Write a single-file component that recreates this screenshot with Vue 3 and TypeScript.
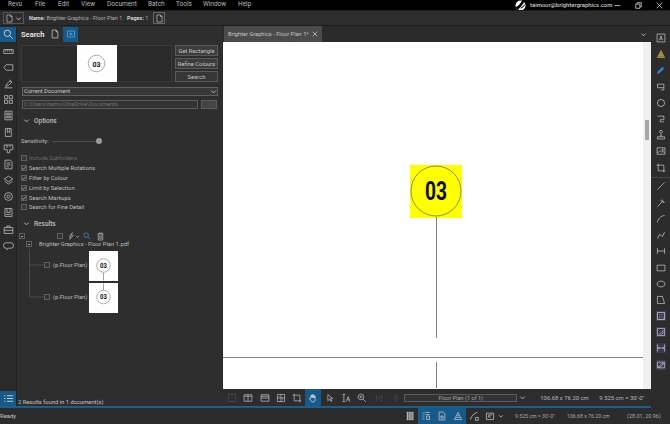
<script setup lang="ts">
const P: Record<string, string> = {
  search: 'M8.5 8.5 12.5 12.5M9.5 5.5a4 4 0 1 1-8 0a4 4 0 0 1 8 0Z',
  ruler: 'M1 4.5h12v5H1ZM3.5 4.5v2.5M6 4.5v2.5M8.5 4.5v2.5M11 4.5v2.5',
  tag: 'M4 3.5h8.5v7H4L1 7Z',
  pen: 'M2 12.5h10M3.5 10.5 5 7.5l4-4 2 2-4 4ZM8 2.5l3.5 3',
  grid: 'M2 2h4v4H2ZM8 2h4v4H8ZM2 8h4v4H2ZM8 8h4v4H8Z',
  panel: 'M2.5 1.5h9v11h-9ZM4.5 4h5v2h-5ZM4.5 8h5v2h-5Z',
  book: 'M3 2h7.5v10H3ZM5.5 2v5l1.5-1 1.5 1V2',
  map: 'M1.5 2.5h11v6h-4v4h-3v-4h-4ZM5 2.5v4M9 2.5v3',
  form: 'M2.5 1.5h7l2 2v9h-9ZM4.5 5h5M4.5 7.5h5M4.5 10h3',
  layers: 'M7 1.5 12.5 5 7 8.5 1.5 5ZM2 8l5 3.5L12 8',
  gear: 'M7 2a5 5 0 1 1 0 10a5 5 0 0 1 0-10ZM7 5a2 2 0 1 1 0 4a2 2 0 0 1 0-4Z',
  bookmark: 'M2.5 2h9v10h-9ZM5 2v5h4V2M4 9.5h6',
  case: 'M1.5 4.5h11v7.5h-11ZM5 4.5V2.5h4v2M1.5 8h11',
  cloud: 'M4 3.5h6a3.5 3.5 0 0 1 0 7H7l-2 2v-2H4a3.5 3.5 0 0 1 0-7Z',
  list: 'M5 3.5h8M5 7h8M5 10.5h8M1.5 3.5h1.5M1.5 7h1.5M1.5 10.5h1.5',
  doc: 'M3 1.5h5.5l2.5 2.5v8.5H3ZM8.5 1.5V4H11',
  rect: 'M2 3h10v8H2ZM5.5 6h3v2h-3Z',
  split: 'M1.5 2.5h11v9h-11ZM7 2.5v9M1.5 4.5h11',
  hsplit: 'M1.5 2.5h11v9h-11ZM1.5 7h11M1.5 4.5h11',
  page: 'M2 2h10v10H2Z',
  compare: 'M2 2h10v10H2ZM7 2v10M2 7h10M4 4.5h1M9 9.5h1',
  crop: 'M3 1v10h10M1 3h10v10',
  hand: 'M4 7V3.5h1.5V6.5V2.5H7V6.5V3H8.5V7V4.5H10V9c0 2-1 3.5-3 3.5S4.5 11.5 3.5 10L2 8l1-.8L4 8.5',
  cursor: 'M4 2v9l2.5-2.5 2 3.5 1-.6-2-3.4H11Z',
  textsel: 'M2 2h4M2 12h4M4 2v10M7.5 12l2.5-7 2.5 7M8.5 9.5h3',
  zoom: 'M8.5 8.5 12.5 12.5M9.5 5.5a4 4 0 1 1-8 0a4 4 0 0 1 8 0ZM3.5 5.5h4M5.5 3.5v4',
  first: 'M3.5 3v8M11 3 6 7l5 4Z',
  prev: 'M10 3 5 7l5 4Z',
  dots: 'M2 2.5h10M2 5.5h10M2 8.5h10M2 11.5h10M3.5 1v12M6 1v12M8.5 1v12M11 1v12',
  snap: 'M2 3h3M2 7h3M2 11h3M6 2h6M6 5h6M8 7h4v5H8Z',
  pagefit: 'M3 1.5h5.5l2.5 2.5v8.5H3ZM5.5 7h3v3h-3Z',
  hilite: 'M2 12 7 2l5 10ZM4.5 9h5M6 6.5h2',
  measure: 'M2 12C3 7 7 3 12 2M9 9h4v4H9Z',
  combo: 'M2 3h10v9H2ZM5 5.5h5M5 5.5v3h3',
  tbox: 'M1.5 1.5h11v11h-11ZM5 10l2-6 2 6M5.7 8.3h2.6',
  pencil: 'M2 12l1-3 6-6 2 2-6 6Z',
  callout: 'M2 3h9v5H2ZM11 8v3H7',
  cloudc: 'M7 2a5 5 0 1 1 0 10a5 5 0 0 1 0-10Z',
  poly: 'M2 3h9v5H6v3h5',
  stamp: 'M2 12.5h10v-3H2ZM7 9.5V7M5 2.5a2 2 0 1 1 4 0a2 2 0 0 1-4 0ZM5.5 7h3',
  image: 'M1.5 2.5h11v9h-11ZM2 10l3.5-3.5 2.5 2 1.5-1.5L12 10M8.5 4.5h1.5v1.5H8.5Z',
  cropr: 'M3 1v10h10M1 3h10v10',
  line: 'M2 12 12 2',
  arrow: 'M2 12 9 5M8 2.5l3.5 3.5-1 1L7 3.5Z',
  arc: 'M2 12C2.5 7 6 3 12 2',
  poly2: 'M2 12 5 6l4 3 3-6',
  dim: 'M2 3v8M12 3v8M2 7h10',
  rrect: 'M1.5 3h11v8h-11Z',
  ellipse: 'M7 3c3.2 0 5.5 1.8 5.5 4S10.200 11 7 11 1.500 9.200 1.500 7 3.800 3 7 3Z',
  polygon: 'M2 2h7l3 10H2Z',
  area: 'M2 2h10v10H2ZM5 5h1M8 5h1M5 8h1M8 8h1M5 10h1M10 10h1',
  slash: 'M2 2h10v10H2ZM4 11l7-7M7 11l4-4',
  width: 'M2 2v10M12 2v10M3 7h8M4 5.500v3M10 5.500v3',
  hatch: 'M2 3h10v8H2ZM3 10l5-5h3L6 10Z',
  trash: 'M2.5 3h9M5 3V1.500h4V3M3.500 3v9.500h7V3M6 5v6M8 5v6',
  lightning: 'M9.500 1 4 8h3l-2.500 5L11 6H7.500Z',
}

const leftIcons = ['ruler', 'tag', 'pen', 'grid', 'panel', 'book', 'map', 'form', 'layers', 'gear', 'bookmark', 'case', 'cloud']
const menus = [
  ['Revu', 27], ['File', 23], ['Edit', 23], ['View', 26], ['Document', 41], ['Batch', 28], ['Tools', 27], ['Window', 35], ['Help', 20],
] as const
const checks = [
  { label: 'Include Subfolders', on: false, dim: true },
  { label: 'Search Multiple Rotations', on: true, dim: false },
  { label: 'Filter by Colour', on: true, dim: false },
  { label: 'Limit by Selection', on: true, dim: false },
  { label: 'Search Markups', on: true, dim: false },
  { label: 'Search for Fine Detail', on: false, dim: false },
]
const rightIcons = [
  { i: 'tbox', c: '#c9c9c9' }, { i: 'hilite', c: '#b9a54a', f: '#8f7f35' }, { i: 'pencil', c: '#2f86c9', f: '#2f86c9' }, { i: 'callout', c: '#c9c9c9' },
  { i: 'cloudc', c: '#c9c9c9' }, { i: 'poly', c: '#c9c9c9' }, { i: 'stamp', c: '#c9c9c9' }, { i: 'image', c: '#c9c9c9' },
  { i: 'cropr', c: '#c9c9c9' }, { i: 'line', c: '#c9c9c9', sep: true }, { i: 'arrow', c: '#c9c9c9' }, { i: 'arc', c: '#c9c9c9' },
  { i: 'poly2', c: '#c9c9c9' }, { i: 'dim', c: '#c9c9c9' }, { i: 'rrect', c: '#c9c9c9' }, { i: 'ellipse', c: '#c9c9c9' },
  { i: 'polygon', c: '#c9c9c9' }, { i: 'area', c: '#dcdcdc', bg: true }, { i: 'slash', c: '#c9c9c9', bg: true },
  { i: 'width', c: '#c9c9c9', bg: true }, { i: 'hatch', c: '#c9c9c9', bg: true },
]
const docTools = [
  { i: 'page', dim: true }, { i: 'split' }, { i: 'hsplit' }, { i: 'compare', gap: true }, { i: 'crop' },
  { i: 'hand', active: true }, { i: 'cursor' }, { i: 'textsel' }, { i: 'zoom' }, { i: 'first', dim: true }, { i: 'prev', dim: true },
]
const statusTools = [
  { i: 'dots', active: false }, { i: 'snap', active: true }, { i: 'pagefit', active: true }, { i: 'hilite', active: true },
  { i: 'measure', active: false }, { i: 'combo', active: false },
]
const resultThumbs = [
  { cy: 14.5, line: 'M15 22V30' },
  { cy: 14, line: 'M15 0V7' },
]
</script>

<template>
  <div class="app">
    <header class="menubar">
      <nav class="menus">
        <span v-for="m in menus" :key="m[0]" class="menu" :style="{ width: m[1] + 'px' }">{{ m[0] }}</span>
      </nav>
      <div class="account">
        <svg class="logo" viewBox="0 0 12 12"><circle cx="6" cy="6" r="5.500" fill="#fff" /><path d="M1 8C4 7 6 4 8 .5L10 2C8 5 6 8 3 10.500ZM6 9c2-.5 3-1.500 5-4.500" fill="#000" stroke="#000" stroke-width=".6" /></svg>
        <span class="email">taimoor@brightergraphics.com</span>
        <div class="winctl">
          <svg viewBox="0 0 10 10"><path d="M1 5h8" /></svg>
          <svg viewBox="0 0 10 10"><path d="M1 3h6v6H1ZM3 3V1h6v6H7" /></svg>
          <svg viewBox="0 0 10 10"><path d="M1 1l8 8M9 1l-8 8" /></svg>
        </div>
      </div>
    </header>

    <div class="filebar">
      <span class="filebtn">
        <svg class="ico" viewBox="0 0 14 14"><path :d="P.doc" /></svg>
        <svg class="chev" viewBox="0 0 8 8"><path d="M1.500 3 4 5.500 6.500 3" /></svg>
      </span>
      <span class="fileinfo"><b>Name:</b> Brighter Graphics - Floor Plan 1</span>
      <span class="fileinfo pages"><b>Pages:</b> 1</span>
      <span class="pagebtn"><svg class="ico" viewBox="0 0 14 14"><path :d="P.doc" /></svg></span>
    </div>

    <div class="workspace">
      <div class="work-left">
        <div class="work-main">
          <aside class="rail">
            <div class="rail-item active"><svg viewBox="0 0 14 14"><path :d="P.search" /></svg></div>
            <div v-for="ic in leftIcons" :key="ic" class="rail-item"><svg viewBox="0 0 14 14"><path :d="P[ic]" /></svg></div>
            <div class="rail-item active rail-bottom"><svg viewBox="0 0 14 14"><path :d="P.list" /></svg></div>
          </aside>

          <section class="panel">
            <div class="panel-head">
              <span class="panel-title">Search</span>
              <span class="head-btn"><svg viewBox="0 0 14 14"><path :d="P.doc" /></svg></span>
              <span class="head-btn on"><svg viewBox="0 0 14 14"><path :d="P.rect" /></svg></span>
            </div>

            <div class="query">
              <div class="preview">
                <div class="thumb">
                  <svg viewBox="0 0 40 37"><circle cx="19.500" cy="18.500" r="8.300" fill="#fff" stroke="#777" stroke-width=".6" /><text x="19.500" y="21.500" text-anchor="middle" textLength="8" lengthAdjust="spacingAndGlyphs" class="tn">03</text></svg>
                </div>
              </div>
              <div class="query-btns">
                <button>Get Rectangle</button>
                <button>Refine Colours</button>
                <button class="plain">Search</button>
              </div>
            </div>

            <div class="select">Current Document<svg viewBox="0 0 8 8"><path d="M1.500 3 4 5.500 6.500 3" /></svg></div>
            <div class="pathrow">
              <div class="path">C:\Users\taimo\OneDrive\Documents</div>
              <div class="pathbtn">...</div>
            </div>

            <div class="section options"><svg viewBox="0 0 8 8"><path d="M1.500 3 4 5.500 6.500 3" /></svg>Options</div>

            <div class="sensitivity">
              <span>Sensitivity:</span>
              <div class="track"><i></i></div>
            </div>

            <div class="checks">
              <label v-for="c in checks" :key="c.label" :class="{ dim: c.dim }">
                <span class="box"><svg v-if="c.on" viewBox="0 0 8 8"><path d="M1.500 4 3.300 6 6.500 2" /></svg></span>{{ c.label }}
              </label>
            </div>

            <div class="section results"><svg viewBox="0 0 8 8"><path d="M1.500 3 4 5.500 6.500 3" /></svg>Results</div>

            <div class="tree">
              <svg class="tree-lines" viewBox="0 0 60 80"><path d="M8.500 17V65M8.500 33H23M8.500 65H23" /></svg>
              <div class="tree-tools">
                <span class="mini minus"></span>
                <span class="mini blank"></span>
                <svg class="bolt" viewBox="0 0 14 14"><path :d="P.lightning" /></svg>
                <svg class="small" viewBox="0 0 8 8"><path d="M1.500 3 4 5.500 6.500 3" /></svg>
                <svg viewBox="0 0 14 14" class="blue"><path :d="P.search" /></svg>
                <svg class="bin" viewBox="0 0 14 14"><path :d="P.trash" /></svg>
              </div>
              <div class="tree-file"><span class="mini minus"></span>Brighter Graphics - Floor Plan 1.pdf</div>
              <div v-for="(t, n) in resultThumbs" :key="n" class="result-row">
                <span class="mini"></span>
                <span class="rlabel">(p.Floor Plan)</span>
                <div class="rthumb">
                  <svg viewBox="0 0 30 30"><path :d="t.line" stroke="#777" stroke-width=".7" fill="none" /><circle cx="15" :cy="t.cy" r="7" fill="#fff" stroke="#777" stroke-width=".6" /><text x="15" :y="t.cy + 2.500" text-anchor="middle" textLength="7" lengthAdjust="spacingAndGlyphs" class="tn small">03</text></svg>
                </div>
              </div>
            </div>

            <div class="found">2 Results found in 1 document(s)</div>
          </section>

          <main class="doc">
            <div class="tabbar">
              <div class="tab">Brighter Graphics - Floor Plan 1*<svg viewBox="0 0 8 8"><path d="M1 1l6 6M7 1 1 7" /></svg></div>
              <svg class="tabchev" viewBox="0 0 8 8"><path d="M1.500 3 4 5.500 6.500 3" /></svg>
            </div>
            <div class="canvas">
              <svg class="sheet" viewBox="0 0 420 347" preserveAspectRatio="none">
                <rect x="187" y="123" width="52" height="53" fill="#ffff00" />
                <circle cx="213" cy="149" r="25" fill="none" stroke="#5d5d2a" stroke-width=".7" />
                <text x="213" y="158" text-anchor="middle" textLength="22" lengthAdjust="spacingAndGlyphs" class="big">03</text>
                <path d="M213.500 175V296M0 315.500H420M213.500 320V346" stroke="#808080" stroke-width="1" fill="none" />
              </svg>
              <div class="vscroll"><i></i></div>
            </div>
            <div class="doctools">
              <span
                v-for="(t, idx) in docTools"
                :key="idx"
                class="dt"
                :class="{ active: t.active, dim: t.dim }"
              ><svg viewBox="0 0 14 14"><path :d="P[t.i]" /></svg></span>
              <div class="pagebox">Floor Plan (1 of 1)</div>
              <svg class="dchev" viewBox="0 0 8 8"><path d="M1.500 3 4 5.500 6.500 3" /></svg>
              <span class="dsize">106.68 x 76.20 cm</span>
              <span class="dscale">9.525 cm = 30'-0"</span>
            </div>
          </main>
        </div>
        <div class="accent"></div>
      </div>

      <aside class="rrail">
        <div v-for="(r, idx) in rightIcons" :key="idx" class="rr" :class="{ sep: r.sep, bg: r.bg }">
          <svg viewBox="0 0 14 14" :style="{ stroke: r.c, fill: r.f || 'none' }"><path :d="P[r.i]" /></svg>
        </div>
      </aside>
    </div>

    <footer class="status">
      <span class="ready">Ready</span>
      <div class="stools">
        <span v-for="(s, idx) in statusTools" :key="idx" class="st" :class="{ active: s.active }"><svg viewBox="0 0 14 14"><path :d="P[s.i]" /></svg></span>
        <svg class="schev" viewBox="0 0 8 8"><path d="M1.500 3 4 5.500 6.500 3" /></svg>
      </div>
      <span class="sv s1">9.525 cm = 30'-0"</span>
      <span class="sv s2">106.68 x 76.20 cm</span>
      <span class="sv s3">(28.01, 20.96)</span>
    </footer>
  </div>
</template>

<style scoped>
.app { width: 670px; height: 424px; display: flex; flex-direction: column; overflow: hidden; background: #2c2c2c; color: #c8c8c8; font-family: Roboto, "Liberation Sans", sans-serif; font-size: 6px; }
svg { fill: none; stroke: #c8c8c8; stroke-width: 1; display: block; }

.menubar { height: 10px; background: #000; display: flex; justify-content: space-between; flex: none; }
.menus { display: flex; padding-left: 8px; }
.menu { font-size: 6.500px; line-height: 9px; color: #b8b8b8; }
.account { display: flex; align-items: center; }
.logo { width: 11px; height: 11px; stroke: none; margin-right: 4px; }
.email { width: 84px; font-size: 5.900px; font-weight: 500; color: #c8c8c8; }
.winctl { display: flex; gap: 14px; padding-right: 7px; }
.winctl svg { width: 7px; height: 7px; stroke-width: 1.200; }

.filebar { height: 16px; flex: none; display: flex; align-items: center; background: #2d2d2d; border-top: 1px solid #1c1c1c; border-bottom: 1px solid #1e1e1e; box-sizing: border-box; padding-left: 3px; }
.filebtn { width: 21px; height: 12px; border: 1px solid #555; box-sizing: border-box; display: flex; align-items: center; justify-content: space-between; padding: 0 1px; }
.filebtn .ico { width: 9px; height: 9px; }
.chev { width: 7px; height: 7px; }
.fileinfo { font-size: 5.500px; color: #b0b0b0; margin-left: 5px; white-space: nowrap; width: 93px; }
.fileinfo b { color: #d4d4d4; }
.fileinfo.pages { width: 21px; margin-left: 5px; }
.pagebtn { width: 12px; height: 12px; border: 1px solid #666; box-sizing: border-box; margin-left: 5px; display: flex; align-items: center; justify-content: center; }
.pagebtn .ico { width: 9px; height: 9px; }

.workspace { flex: 1; display: flex; min-height: 0; }
.work-left { flex: 1; display: flex; flex-direction: column; min-width: 0; }
.work-main { flex: 1; display: flex; min-height: 0; }
.accent { height: 2px; background: #1c5f8c; flex: none; }

.rail { width: 16px; flex: none; display: flex; flex-direction: column; padding-top: 1px; background: #2a2a2a; border-right: 1px solid #232323; box-sizing: content-box; }
.rail-item { height: 16.200px; display: flex; align-items: center; justify-content: center; flex: none; }
.rail-item svg { width: 11px; height: 11px; stroke: #bcbcbc; }
.rail-item.active { background: #175a89; height: 15px; }
.rail-item.active svg { stroke: #e8e8e8; }
.rail-item:first-child { margin-bottom: 1px; }
.rail-bottom { margin-top: auto; }

.panel { width: 205px; flex: none; display: flex; flex-direction: column; padding-left: 4px; box-sizing: border-box; background: #2e2e2e; }
.panel-head { height: 16px; flex: none; display: flex; align-items: center; }
.panel-title { font-size: 7.500px; font-weight: 700; color: #e0e0e0; width: 27px; }
.head-btn { width: 14px; height: 15px; display: flex; align-items: center; justify-content: center; }
.head-btn svg { width: 10px; height: 10px; stroke: #d0d0d0; }
.head-btn.on { background: #175a89; margin-left: 1px; width: 15px; }
.head-btn.on svg { stroke: #5db3e8; }

.query { display: flex; margin-top: 3px; height: 37px; flex: none; }
.preview { width: 151px; border: 1px solid #3a3a3a; box-sizing: border-box; display: flex; justify-content: center; margin-right: 3px; background: #2a2a2a; }
.thumb { width: 40px; height: 37px; background: #fff; margin-top: -1px; }
.tn { font-family: Roboto, sans-serif; font-weight: 700; font-size: 8px; fill: #111; stroke: none; }
.tn.small { font-size: 7px; }
.query-btns { width: 43px; display: flex; flex-direction: column; justify-content: space-between; }
.query-btns button { height: 11px; padding: 0; border: 1px solid #5a5a5a; background: #3d3d3d; color: #c4c4c4; font: 5.800px Roboto, sans-serif; line-height: 8px; }
.query-btns button.plain { background: #363636; }

.select { margin-top: 5px; margin-left: 1px; width: 196px; height: 9px; flex: none; box-sizing: border-box; border: 1px solid #606060; background: #383838; font-size: 5.700px; line-height: 7px; padding-left: 1px; display: flex; justify-content: space-between; color: #c4c4c4; }
.select svg { width: 7px; height: 7px; }
.pathrow { display: flex; margin-top: 4px; margin-left: 1px; flex: none; }
.path { width: 176px; height: 9px; box-sizing: border-box; border: 1px solid #5a5a5a; font-size: 5.600px; line-height: 7px; padding-left: 1px; color: #717171; background: #333; }
.pathbtn { width: 16px; height: 9px; margin-left: 3px; box-sizing: border-box; border: 1px solid #5a5a5a; background: #444; color: #777; text-align: center; font-size: 5px; line-height: 6px; }

.section { display: flex; align-items: center; font-size: 6.500px; font-weight: 500; color: #bcbcbc; flex: none; height: 9px; }
.section svg { width: 7px; height: 7px; margin-left: 2px; margin-right: 4px; }
.options { margin-top: 7px; }
.sensitivity { display: flex; align-items: center; height: 8px; margin-top: 12px; flex: none; font-size: 5.800px; color: #bdbdbd; }
.sensitivity span { width: 31px; }
.track { width: 47px; height: 1px; background: #4e4e4e; position: relative; }
.track i { position: absolute; right: -3px; top: -2.500px; width: 6px; height: 6px; border-radius: 50%; background: #9b9b9b; }

.checks { margin-top: 8px; flex: none; display: flex; flex-direction: column; }
.checks label { display: flex; align-items: center; height: 9.900px; font-size: 5.800px; color: #bdbdbd; white-space: nowrap; }
.checks label.dim { color: #6a6a6a; }
.box { width: 6px; height: 6px; border: 1px solid #5f5f5f; box-sizing: border-box; margin-right: 2px; flex: none; position: relative; background: #383838; }
.box svg { position: absolute; left: -1px; top: -1px; width: 6px; height: 6px; stroke: #c8c8c8; stroke-width: .8; }
.results { margin-top: 7px; }

.tree { position: relative; margin-top: 4px; flex: none; }
.tree-lines { position: absolute; left: 0; top: 0; width: 60px; height: 80px; stroke: #555; stroke-width: .7; }
.mini { width: 6px; height: 6px; border: 1px solid #5f5f5f; box-sizing: border-box; display: block; flex: none; background: #2e2e2e; position: relative; }
.minus::after { content: ""; position: absolute; left: 1px; right: 1px; top: 1.500px; height: 1px; background: #999; }
.tree-tools { display: flex; align-items: center; height: 8px; position: relative; margin-left: -2px; }
.tree-tools .mini.blank { margin-left: 32px; }
.tree-tools svg { width: 8px; height: 8px; }
.tree-tools svg.bolt { margin-left: 4px; }
.tree-tools svg.small { width: 5px; height: 5px; }
.tree-tools svg.blue { stroke: #58a7d8; margin-left: 3px; }
.tree-tools svg.bin { width: 9px; height: 9px; margin-left: 5px; }
.tree-file { display: flex; align-items: center; height: 8px; font-size: 5.800px; color: #bdbdbd; position: relative; white-space: nowrap; margin-left: 5px; gap: 7px; margin-bottom: 3px; }
.result-row { display: flex; align-items: center; height: 30px; margin-left: 23px; position: relative; margin-bottom: 2px; }
.result-row .mini { width: 6px; height: 6px; background: #333; margin-bottom: 2px; }
.rlabel { font-size: 5.700px; color: #bdbdbd; margin-left: 3px; width: 36px; white-space: nowrap; margin-bottom: 2px; }
.rthumb { width: 29px; height: 30px; background: #fff; }
.rthumb svg { width: 29px; height: 30px; stroke: none; }
.found { margin-top: auto; margin-left: -3px; height: 7px; line-height: 7px; font-size: 5.800px; color: #c4c4c4; white-space: nowrap; }

.doc { flex: 1; min-width: 0; display: flex; flex-direction: column; margin-left: 1px; }
.tabbar { height: 16px; flex: none; display: flex; justify-content: space-between; align-items: center; background: #2b2b2b; }
.tab { width: 98px; height: 16px; background: #4b4b4b; margin-left: 1px; display: flex; align-items: center; justify-content: space-between; font-size: 5.700px; color: #c4c4c4; padding: 0 4px; box-sizing: border-box; white-space: nowrap; }
.tab svg { width: 6px; height: 6px; }
.tabchev { width: 7px; height: 7px; margin-right: 4px; }
.canvas { flex: 1; display: flex; min-height: 0; background: #fff; }
.sheet { width: 420px; height: 100%; stroke: none; flex: none; }
.big { font-family: Roboto, sans-serif; font-weight: 700; font-size: 25px; fill: #0a0a0a; stroke: none; }
.vscroll { flex: 1; background: #f0f0f0; padding: 78px 2px 0; }
.vscroll i { display: block; width: 4px; height: 20px; background: #a6a6a6; }
.doctools { height: 17px; flex: none; display: flex; align-items: center; background: #2d2d2d; padding-left: 1px; position: relative; }
.dt { width: 16px; height: 17px; display: flex; align-items: center; justify-content: center; flex: none; margin-right: .300px; }
.dt svg { width: 10px; height: 10px; stroke: #c0c0c0; }
.dt.active { background: #175a89; }
.dt.active svg { stroke: #e6e6e6; }
.dt.dim svg { stroke: #4e4e4e; }
.pagebox { width: 113px; height: 8px; box-sizing: border-box; margin-left: 1px; border: 1px solid #5a5a5a; background: #333; text-align: center; font-size: 5.600px; line-height: 6px; color: #a8a8a8; }
.dchev { width: 7px; height: 7px; margin-left: 2px; }
.dsize { font-size: 5.900px; color: #b8b8b8; margin-left: 14px; width: 59px; white-space: nowrap; }
.dscale { font-size: 5.900px; color: #b8b8b8; white-space: nowrap; }

.rrail { width: 19px; flex: none; display: flex; flex-direction: column; padding-top: 4px; background: #2c2c2c; }
.rr { height: 16.200px; flex: none; display: flex; align-items: center; justify-content: center; }
.rr svg { width: 10px; height: 10px; }
.rr.sep { border-top: 1px solid #444; height: 18px; margin-top: 1px; box-sizing: border-box; }
.rr.bg svg { background: #3a3950; }

.status { height: 16px; flex: none; display: flex; align-items: center; background: #2c2c2c; position: relative; }
.ready { font-size: 5.900px; color: #c4c4c4; width: 402px; }
.stools { display: flex; align-items: center; height: 16px; }
.st { width: 16px; height: 16px; display: flex; align-items: center; justify-content: center; flex: none; }
.st svg { width: 10px; height: 10px; stroke: #d0d0d0; }
.st.active { background: #175a89; }
.schev { width: 6px; height: 6px; }
.sv { font-size: 5.200px; color: #a8a8a8; white-space: nowrap; }
.s1 { margin-left: 11px; width: 52px; }
.s2 { width: 60px; }
.s3 { font-size: 5.500px; }
</style>

<style>
html, body { margin: 0; background: #2c2c2c; }
</style>
